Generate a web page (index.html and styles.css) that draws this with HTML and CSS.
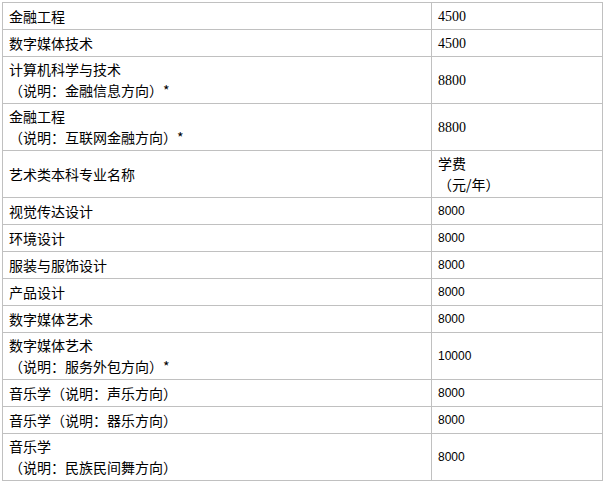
FILE: index.html
```html
<!DOCTYPE html>
<html lang="zh-CN">
<head>
<meta charset="utf-8">
<title>学费表</title>
<link rel="stylesheet" href="styles.css">
</head>
<body>
<table class="fees">
  <colgroup><col class="c-name"><col class="c-fee"></colgroup>
  <tbody>
    <tr><td>金融工程</td><td class="num-serif">4500</td></tr>
    <tr><td>数字媒体技术</td><td class="num-serif">4500</td></tr>
    <tr><td>计算机科学与技术<br>（说明：金融信息方向）*</td><td class="num-serif">8800</td></tr>
    <tr><td>金融工程<br>（说明：互联网金融方向）*</td><td class="num-serif">8800</td></tr>
    <tr><td>艺术类本科专业名称</td><td>学费<br>（元/年）</td></tr>
    <tr><td>视觉传达设计</td><td class="num">8000</td></tr>
    <tr><td>环境设计</td><td class="num">8000</td></tr>
    <tr><td>服装与服饰设计</td><td class="num">8000</td></tr>
    <tr><td>产品设计</td><td class="num">8000</td></tr>
    <tr><td>数字媒体艺术</td><td class="num">8000</td></tr>
    <tr><td>数字媒体艺术<br>（说明：服务外包方向）*</td><td class="num">10000</td></tr>
    <tr><td>音乐学（说明：声乐方向）</td><td class="num">8000</td></tr>
    <tr><td>音乐学（说明：器乐方向）</td><td class="num">8000</td></tr>
    <tr><td>音乐学<br>（说明：民族民间舞方向）</td><td class="num">8000</td></tr>
  </tbody>
</table>
</body>
</html>
```

FILE: styles.css
```css
html, body {
  margin: 0;
  padding: 0;
  background: #ffffff;
}

body {
  font-family: "Noto Sans CJK SC", "Liberation Sans", sans-serif;
  font-size: 14px;
  color: #000000;
}

.fees {
  margin: 2px 0 0 2px;
  width: 600px;
  table-layout: fixed;
  border-collapse: collapse;
}

.c-name { width: 429px; }
.c-fee { width: 171px; }

.fees td {
  border: 1px solid #c0c0c0;
  padding: 2px 6px;
  height: 22px;
  line-height: 21px;
  vertical-align: middle;
  text-align: left;
  white-space: nowrap;
}

.fees td.num-serif {
  font-family: "Liberation Serif", serif;
  font-size: 14px;
}

.fees td.num {
  font-family: "Liberation Sans", sans-serif;
  font-size: 12px;
}
```
